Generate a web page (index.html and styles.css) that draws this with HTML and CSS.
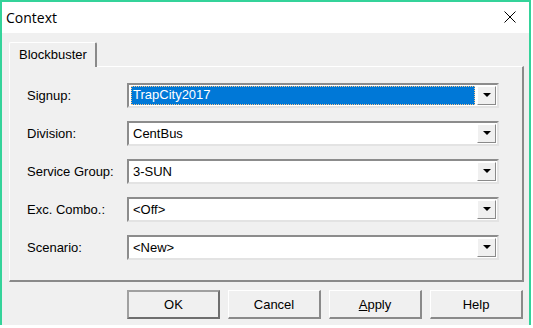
FILE: index.html
```html
<!DOCTYPE html>
<html lang="en">
<head>
  <meta charset="UTF-8" />
  <title>Context</title>
  <link rel="stylesheet" href="styles.css">
</head>
<body>
  <div class="window">
    <div class="titlebar">
      <span class="title">Context</span>
      <svg class="close" width="12" height="12" viewBox="0 0 12 12">
        <path d="M0.5 0.5 L11.5 11.5 M11.5 0.5 L0.5 11.5" stroke="#000" stroke-width="1" fill="none" />
      </svg>
    </div>

    <div class="content">
      <div class="tabs">
        <div class="tab">Blockbuster</div>
      </div>

      <div class="panel">
        <div class="row">
          <label>Signup:</label>
          <div class="combo">
            <span class="value selected">TrapCity2017</span>
            <span class="arrow"></span>
          </div>
        </div>
        <div class="row">
          <label>Division:</label>
          <div class="combo">
            <span class="value">CentBus</span>
            <span class="arrow"></span>
          </div>
        </div>
        <div class="row">
          <label>Service Group:</label>
          <div class="combo">
            <span class="value">3-SUN</span>
            <span class="arrow"></span>
          </div>
        </div>
        <div class="row">
          <label>Exc. Combo.:</label>
          <div class="combo">
            <span class="value">&lt;Off&gt;</span>
            <span class="arrow"></span>
          </div>
        </div>
        <div class="row">
          <label>Scenario:</label>
          <div class="combo">
            <span class="value">&lt;New&gt;</span>
            <span class="arrow"></span>
          </div>
        </div>
      </div>

      <div class="buttons">
        <button class="default">OK</button>
        <button>Cancel</button>
        <button><u>A</u>pply</button>
        <button>Help</button>
      </div>
    </div>
  </div>
</body>
</html>
```

FILE: styles.css
```css
* {
  box-sizing: border-box;
}
body {
  margin: 0;
  background: #fff;
  font-family: 'Liberation Sans', Arial, sans-serif;
  font-size: 13px;
  color: #000;
}
.window {
  width: 531px;
  height: 325px;
  background: #f0f0f0;
  border: 2px solid #34d39a;
  border-bottom: none;
}
.titlebar {
  height: 31px;
  background: #fff;
  display: flex;
  align-items: center;
  justify-content: space-between;
  padding: 0 13px 1px 4px;
}
.title {
  font-family: 'Open Sans', 'Noto Sans', sans-serif;
  font-size: 14px;
}
.close {
  display: block;
}
.content {
  padding: 9px 0 0 7px;
}
.tabs {
  display: flex;
}
.tab {
  position: relative;
  height: 25px;
  width: 88px;
  margin-bottom: -1px;
  padding: 4px 0 0 9px;
  background: #f0f0f0;
  border-top: 1px solid #fff;
  border-left: 1px solid #fff;
  border-right: 2px solid #8a8a8a;
  border-radius: 2px 2px 0 0;
}
.panel {
  width: 515px;
  height: 216px;
  padding: 16px 0 0 17px;
  border-top: 1px solid #fff;
  border-left: 1px solid #fff;
  border-right: 2px solid #8a8a8a;
  border-bottom: 2px solid #8a8a8a;
  display: flex;
  flex-direction: column;
  gap: 14px;
}
.row {
  display: flex;
  align-items: center;
  height: 24px;
}
.row label {
  width: 100px;
}
.combo {
  width: 372px;
  height: 25px;
  display: flex;
  align-items: center;
  justify-content: space-between;
  background: #fff;
  border-top: 2px solid #8c8c8c;
  border-left: 2px solid #8c8c8c;
  border-right: 2px solid #e3e3e3;
  border-bottom: 2px solid #e3e3e3;
  padding: 1px 1px 1px 2px;
}
.value {
  padding-left: 2px;
}
.value.selected {
  flex: 1;
  height: 19px;
  line-height: 17px;
  margin-right: 2px;
  background: #0078d7;
  color: #fff;
  outline: 1px dotted #f5c48a;
  outline-offset: -1px;
}
.arrow {
  width: 19px;
  height: 19px;
  background: #f0f0f0;
  border-top: 1px solid #fff;
  border-left: 1px solid #fff;
  border-right: 1px solid #8a8a8a;
  border-bottom: 1px solid #8a8a8a;
  display: flex;
  align-items: center;
  justify-content: center;
}
.arrow::after {
  content: "";
  border-left: 4px solid transparent;
  border-right: 4px solid transparent;
  border-top: 4px solid #000;
}
.buttons {
  display: flex;
  gap: 8px;
  margin-top: 8px;
  padding-left: 118px;
}
.buttons button {
  width: 93px;
  height: 29px;
  font-family: 'Liberation Sans', Arial, sans-serif;
  font-size: 13px;
  color: #000;
  background: #f0f0f0;
  border-top: 1px solid #fff;
  border-left: 1px solid #fff;
  border-right: 2px solid #8a8a8a;
  border-bottom: 2px solid #8a8a8a;
  padding: 0;
}
.buttons button.default {
  border: 2px solid #6e6e6e;
  border-top-color: #a0a0a0;
  border-left-color: #a0a0a0;
}
.buttons u {
  text-decoration: underline;
}
```
